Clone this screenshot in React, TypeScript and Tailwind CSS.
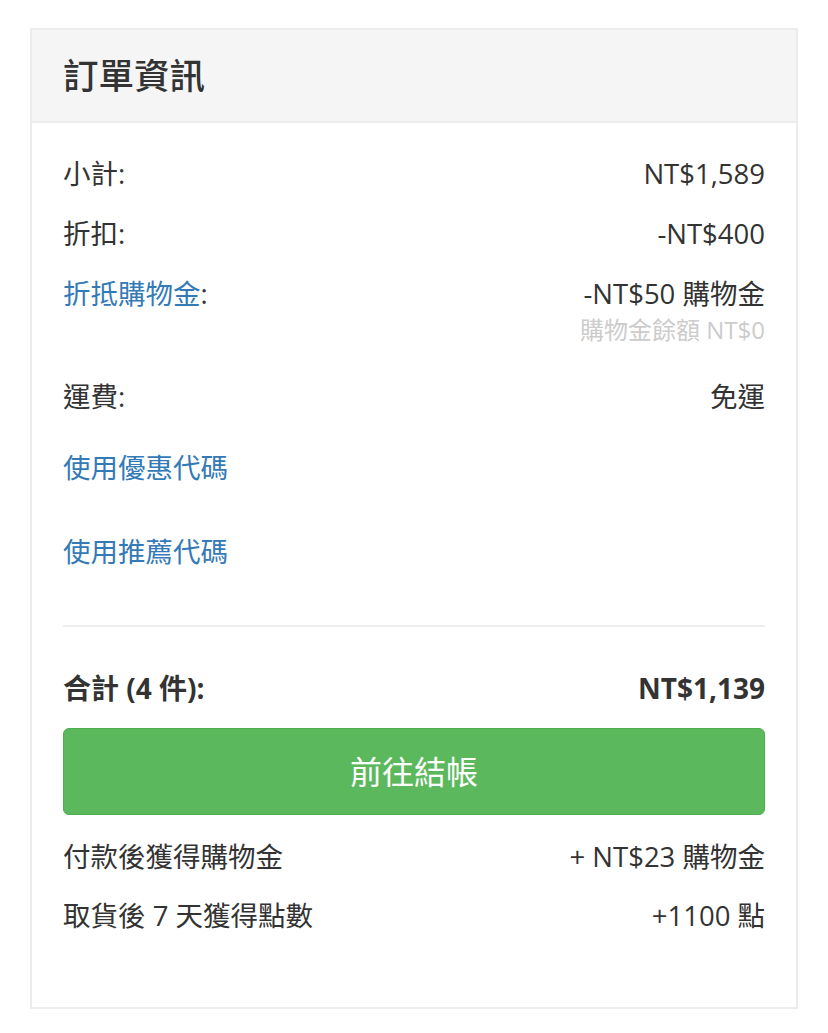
import React from "react";

const font = { fontFamily: '"Open Sans", "Noto Sans CJK TC", sans-serif' };

function Row({ label, value, labelClass = "" }: { label: React.ReactNode; value?: React.ReactNode; labelClass?: string }) {
  return (
    <div className="flex h-[36px] items-center justify-between text-[27.5px] leading-[36px] text-[#333]">
      <span className={labelClass}>{label}</span>
      {value !== undefined && <span>{value}</span>}
    </div>
  );
}

export default function App() {
  return (
    <div className="min-h-[1033px] w-[828px] bg-white pt-[28px] pl-[30px]" style={font}>
      <div className="w-[768px] border-2 border-[#ececec] bg-white">
        <div className="flex h-[93px] items-center border-b-2 border-[#ececec] bg-[#f5f5f5] px-[31px]">
          <h2 className="text-[35.5px] font-medium leading-none text-[#333]">訂單資訊</h2>
        </div>
        <div className="px-[31px] pt-[33px] pb-[73px]">
          <Row label="小計:" value="NT$1,589" />
          <div className="mt-[24px]">
            <Row label="折扣:" value="-NT$400" />
          </div>
          <div className="mt-[24px]">
            <Row
              label={
                <>
                  <span className="text-[#337ab7]">折抵購物金</span>:
                </>
              }
              value="-NT$50 購物金"
            />
            <div className="mt-[4px] text-right text-[24px] leading-[28px] text-[#cccccc]">購物金餘額 NT$0</div>
          </div>
          <div className="mt-[35px]">
            <Row label="運費:" value="免運" />
          </div>
          <div className="mt-[35px]">
            <Row label="使用優惠代碼" labelClass="text-[#337ab7]" />
          </div>
          <div className="mt-[48px]">
            <Row label="使用推薦代碼" labelClass="text-[#337ab7]" />
          </div>
          <div className="mt-[55px] border-t-2 border-[#eeeeee]" />
          <div className="mt-[43px] flex h-[36px] items-center justify-between text-[28px] font-bold leading-[36px] text-[#333]">
            <span>合計 (4 件):</span>
            <span>NT$1,139</span>
          </div>
          <button className="mt-[22px] flex h-[87px] w-full items-center justify-center rounded-[6px] border border-[#4cae4c] bg-[#5cb85c] text-[32px] text-white">
            前往結帳
          </button>
          <div className="mt-[24px]">
            <Row label="付款後獲得購物金" value="+ NT$23 購物金" />
          </div>
          <div className="mt-[23px]">
            <Row label="取貨後 7 天獲得點數" value="+1100 點" />
          </div>
        </div>
      </div>
    </div>
  );
}
